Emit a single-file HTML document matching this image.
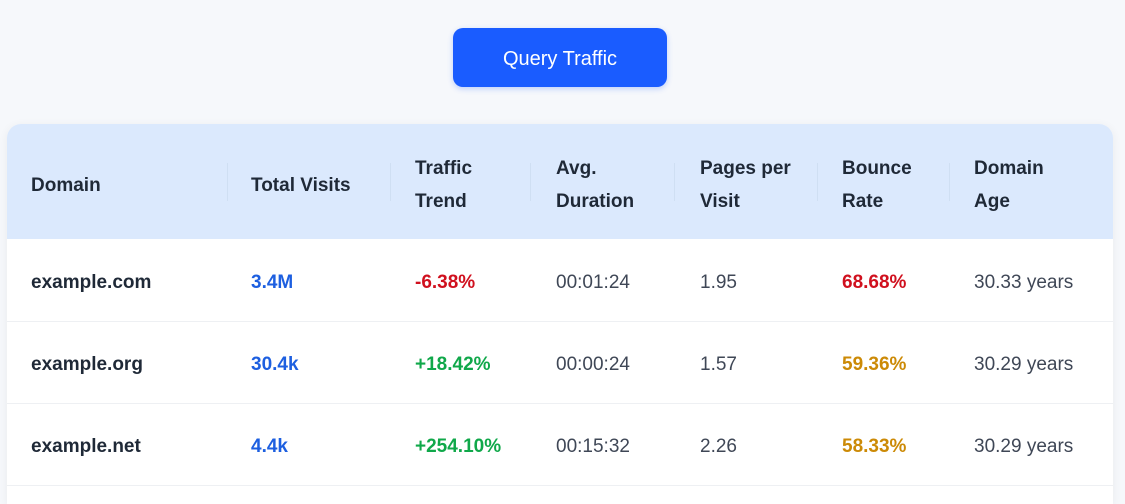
<!DOCTYPE html>
<html><head><style>
body{margin:0;width:1125px;height:489px;background:#f6f8fb;font-family:"Liberation Sans",sans-serif;overflow:hidden;position:relative}
.btn{position:absolute;left:453px;top:28px;width:214px;height:59px;background:#1a5cff;border-radius:10px;color:#fff;font-size:20px;line-height:62px;text-align:center;box-shadow:0 2px 6px rgba(26,92,255,.25)}
.card{position:absolute;left:7px;top:124px;width:1106px;height:380px;background:#fff;border-radius:14px 14px 0 0;overflow:hidden;box-shadow:0 2px 10px rgba(0,0,0,.06)}
.head{position:absolute;left:0;top:0;width:100%;height:115px;background:#dbe9fd}
.c{position:absolute;font-size:19px;line-height:33px;color:#1f2937}
.h{font-weight:bold;color:#1f2937}
.sep{position:absolute;top:39px;height:38px;width:1px;background:#cfdff3}
.row{position:absolute;left:0;width:100%;height:82px;border-bottom:1px solid #eef0f3}
.row .c{top:27px;color:#3f4756}
.b{font-weight:bold}
</style></head><body>
<div class="btn">Query Traffic</div>
<div class="card">
<div class="head">
<div class="c h" style="left:24px;top:45px">Domain</div>
<div class="c h" style="left:244px;top:45px">Total Visits</div>
<div class="c h" style="left:408px;top:28px">Traffic<br>Trend</div>
<div class="c h" style="left:549px;top:28px">Avg.<br>Duration</div>
<div class="c h" style="left:693px;top:28px">Pages per<br>Visit</div>
<div class="c h" style="left:835px;top:28px">Bounce<br>Rate</div>
<div class="c h" style="left:967px;top:28px">Domain<br>Age</div>
<div class="sep" style="left:220px"></div><div class="sep" style="left:383px"></div><div class="sep" style="left:523px"></div><div class="sep" style="left:667px"></div><div class="sep" style="left:810px"></div><div class="sep" style="left:942px"></div>
</div>
<div class="row" style="top:115px">
<div class="c b" style="left:24px;color:#1f2937">example.com</div>
<div class="c b" style="left:244px;color:#1d5fe0">3.4M</div>
<div class="c b" style="left:408px;color:#d0101e">-6.38%</div>
<div class="c" style="left:549px">00:01:24</div>
<div class="c" style="left:693px">1.95</div>
<div class="c b" style="left:835px;color:#d0101e">68.68%</div>
<div class="c" style="left:967px">30.33 years</div>
</div>
<div class="row" style="top:197px">
<div class="c b" style="left:24px;color:#1f2937">example.org</div>
<div class="c b" style="left:244px;color:#1d5fe0">30.4k</div>
<div class="c b" style="left:408px;color:#10a84a">+18.42%</div>
<div class="c" style="left:549px">00:00:24</div>
<div class="c" style="left:693px">1.57</div>
<div class="c b" style="left:835px;color:#cc8a06">59.36%</div>
<div class="c" style="left:967px">30.29 years</div>
</div>
<div class="row" style="top:279px">
<div class="c b" style="left:24px;color:#1f2937">example.net</div>
<div class="c b" style="left:244px;color:#1d5fe0">4.4k</div>
<div class="c b" style="left:408px;color:#10a84a">+254.10%</div>
<div class="c" style="left:549px">00:15:32</div>
<div class="c" style="left:693px">2.26</div>
<div class="c b" style="left:835px;color:#cc8a06">58.33%</div>
<div class="c" style="left:967px">30.29 years</div>
</div>
</div>
</body></html>
